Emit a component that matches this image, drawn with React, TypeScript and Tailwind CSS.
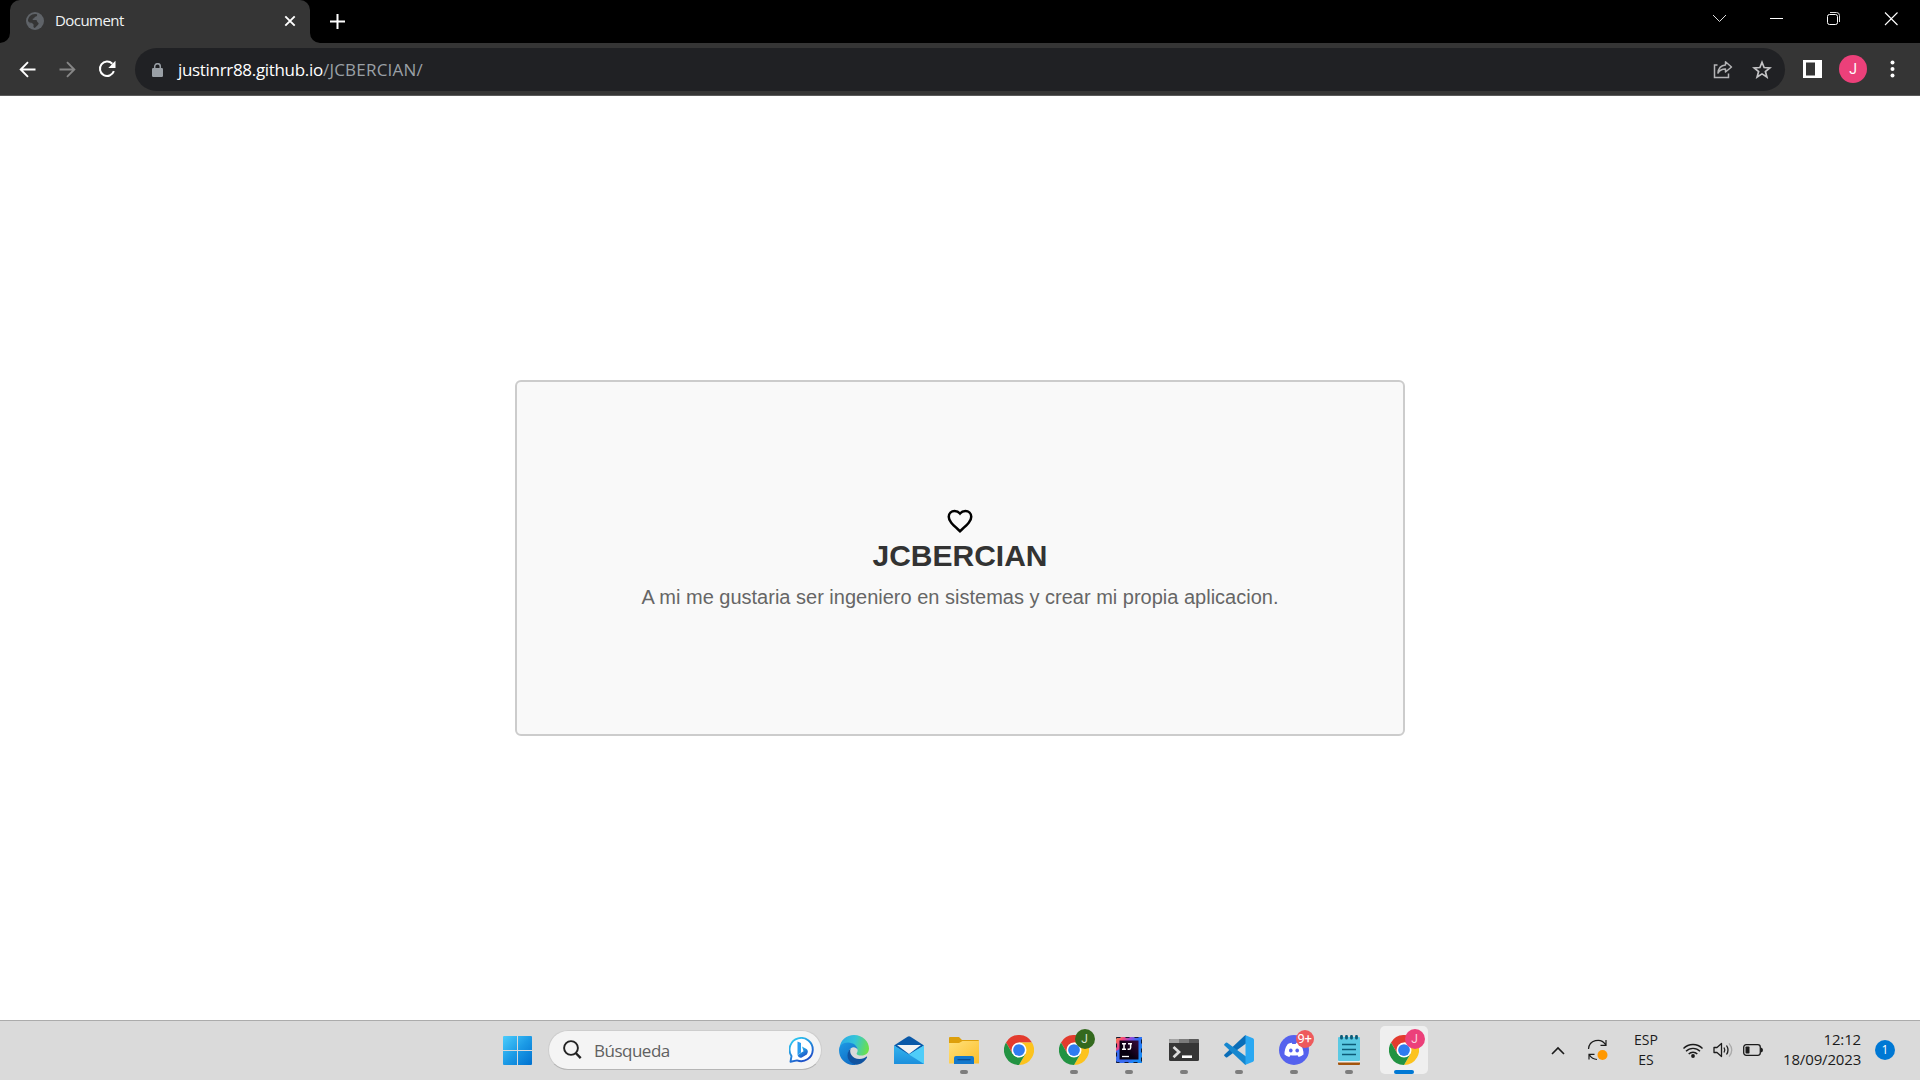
import React from "react";

const UI = "font-['Open_Sans','Noto_Sans',sans-serif]";

function Tab() {
  return (
    <div className="relative ml-[10px] flex h-[43px] w-[300px] items-center rounded-t-[10px] bg-[#353535] pl-4 pr-[14px]">
      <svg className="absolute -left-[10px] bottom-0" width="10" height="10"><path d="M10 0V10H0A10 10 0 0 0 10 0Z" fill="#353535" /></svg>
      <svg className="absolute -right-[10px] bottom-0" width="10" height="10"><path d="M0 0V10H10A10 10 0 0 1 0 0Z" fill="#353535" /></svg>
      <svg width="18" height="18" viewBox="0 0 18 18" className="-mt-[1px]">
        <circle cx="9" cy="9" r="9" fill="#5f6368" />
        <path d="M11 2.300C11.600 3.600 10.600 4.600 9.200 4.700C8.400 4.900 8.800 6.200 7.400 6.500C6.200 6.800 6.400 8 7.400 8H10C11.200 8.200 11 9.600 11.600 10.200C12.600 10.700 13 11.600 12.200 12.600C11 14 10.200 15 8.600 16C7.400 15.600 7.200 14.800 7.600 13.600C7.800 12.500 7.200 11.600 6.200 11.200H3.500L2 9C2 5.200 5 2 9 2Z" fill="#353535" />
        <path d="M2.300 10.200C3.500 11.300 5 11.200 6 11.400" fill="none" stroke="#5f6368" />
      </svg>
      <span className={`${UI} ml-[11px] -mt-[4px] text-[15px] leading-5 tracking-[-0.55px] text-[#f1f3f4]`}>Document</span>
      <svg className="ml-auto -mt-[1px]" width="12" height="12" viewBox="0 0 12 12"><path d="M1.3 1.3L10.7 10.7M10.7 1.3L1.3 10.7" stroke="#fff" strokeWidth="1.9" /></svg>
    </div>
  );
}

function TitleBar() {
  return (
    <div className="flex h-[43px] bg-black">
      <Tab />
      <svg className="ml-[19px] mt-[13px]" width="17" height="17" viewBox="0 0 17 17"><path d="M8.5 1V16M1 8.5H16" stroke="#fff" strokeWidth="2" /></svg>
      <div className="ml-auto flex h-[37px] items-center text-white">
        <svg width="58" height="37"><path d="M23 15L29.5 21.5L36 15" fill="none" stroke="#ddd" strokeWidth="1" /></svg>
        <svg width="57" height="37"><path d="M22 18.5H35" stroke="#fff" /></svg>
        <svg width="57" height="37"><rect x="22.5" y="14.5" width="10" height="10" rx="2" fill="none" stroke="#fff" /><path d="M25 12.5H31.500A3 3 0 0 1 34.500 15.500V22" fill="none" stroke="#ddd" /></svg>
        <svg width="58" height="37"><path d="M23 12.500L35.500 25M35.500 12.500L23 25" stroke="#fff" strokeWidth="1.100" /></svg>
      </div>
    </div>
  );
}

function Toolbar() {
  return (
    <div className="flex h-[53px] items-center border-b border-[#5a5a5a] bg-[#353535]">
      <svg className="ml-[19px]" width="17" height="17" viewBox="0 0 17 17"><path d="M16.500 8.500H2M9 1.200L1.700 8.500L9 15.800" fill="none" stroke="#fff" strokeWidth="1.900" /></svg>
      <svg className="ml-[23px]" width="17" height="17" viewBox="0 0 17 17"><path d="M0.500 8.500H15M8 1.200L15.300 8.500L8 15.800" fill="none" stroke="#868686" strokeWidth="1.900" /></svg>
      <svg className="ml-[22px]" width="18" height="18" viewBox="0 0 18 18"><path d="M14.300 3.700A7.200 7.200 0 1 0 15.900 11.200" fill="none" stroke="#fff" strokeWidth="2" /><path d="M17.500 0.800V8H10.300Z" fill="#fff" /></svg>
      <div className="ml-[19px] mt-[1px] flex h-[43px] w-[1650px] items-center rounded-full bg-[#202124] pl-[17px] pr-[13px]">
        <svg width="11" height="14" viewBox="0 0 11 14"><rect y="5" width="11" height="9" rx="1.200" fill="#9aa0a6" /><path d="M2.700 5.500V3.500A2.800 2.800 0 0 1 8.300 3.500V5.500" fill="none" stroke="#9aa0a6" strokeWidth="1.500" /></svg>
        <div className={`${UI} ml-[15px] flex text-[17px] leading-6`}>
          <span className="w-[145px] whitespace-nowrap tracking-[-0.32px] text-white">justinrr88.github.io</span>
          <span className="whitespace-nowrap tracking-[0.2px] text-[#9aa0a6]">/JCBERCIAN/</span>
        </div>
        <svg className="ml-auto" width="20" height="19" viewBox="0 0 20 19"><path d="M4.500 5H1.500V17.500H15.500V13.500" fill="none" stroke="#b4b4b6" strokeWidth="1.500" /><path d="M12.500 1.800L18.500 7L12.500 12V9C9 8.900 6.700 10.200 5 13C5.300 8.500 8 5.400 12.500 4.900Z" fill="none" stroke="#b4b4b6" strokeWidth="1.500" strokeLinejoin="round" /></svg>
        <svg className="ml-[19px]" width="20" height="20" viewBox="0 0 20 20"><path d="M10 2.300L12.100 7.500L17.800 7.900L13.400 11.500L14.900 17L10 13.900L5.100 17L6.600 11.500L2.200 7.900L7.900 7.500Z" fill="none" stroke="#c4c4c6" strokeWidth="1.700" /></svg>
      </div>
      <svg className="ml-[18px]" width="19" height="18"><path fillRule="evenodd" d="M0 0H19V18H0ZM3 2.500V15.500H12V2.500Z" fill="#fff" /></svg>
      <div className="ml-[17px] flex h-7 w-7 items-center justify-center rounded-full bg-[#ec407a] font-[Roboto,sans-serif] text-[14px] text-white">J</div>
      <svg className="ml-[23px]" width="5" height="18"><circle cx="2.500" cy="2.500" r="2" fill="#fff" /><circle cx="2.500" cy="9" r="2" fill="#fff" /><circle cx="2.500" cy="15.500" r="2" fill="#fff" /></svg>
    </div>
  );
}

function Chrome() {
  return (
    <svg width="30" height="30" viewBox="0 0 48 48">
      <path d="M24 12H44.800A24 24 0 0 0 3.200 12L13.600 30Z" fill="#e33b2e" />
      <path d="M34.400 30L24 48A24 24 0 0 0 44.800 12H24Z" fill="#fcc31e" />
      <path d="M13.600 30L3.200 12A24 24 0 0 0 24 48L34.400 30Z" fill="#229342" />
      <circle cx="24" cy="24" r="12" fill="#fff" />
      <circle cx="24" cy="24" r="9.400" fill="#2f7cf0" />
    </svg>
  );
}

function Edge() {
  return (
    <svg width="30" height="30" viewBox="0 0 30 30">
      <defs>
        <linearGradient id="edgeTop" x1="0" y1="0.300" x2="1" y2="0.500"><stop offset="0" stopColor="#2aa9e8" /><stop offset=".5" stopColor="#35c5d8" /><stop offset="1" stopColor="#6be04a" /></linearGradient>
        <linearGradient id="edgeLeft" x1="0" y1="0" x2="0.600" y2="1"><stop offset="0" stopColor="#1f9be6" /><stop offset="1" stopColor="#0f6cc4" /></linearGradient>
      </defs>
      <path d="M0.500 13C1.500 5 7.500 0 15 0C24 0 30 6.500 30 13.500C30 18 26.500 20.500 22.500 20.500C19.500 20.500 17.300 19.500 17.600 18.400C18 17.500 18.800 16.800 18.600 14.800C18.200 11.500 14.500 8.500 10 8.500C5.500 8.500 2 10.500 0.500 13Z" fill="url(#edgeTop)" />
      <path d="M0 15C0 10.500 4 7.500 9 7.500C14.500 7.500 18.600 11.200 18.600 14.800C17.500 12.300 14 11.400 11.600 13.600C7.500 17.500 9.500 26.500 17.500 29.800C8 31.500 0 24.500 0 15Z" fill="url(#edgeLeft)" />
      <path d="M11.600 13.600C10 18 13 24 20.500 24C24 24 25.800 22.700 27.300 21.700C28 21.400 28.300 22 28 22.600C25.800 26.800 21.800 29.600 17.500 29.800C8 28.500 6 18.500 11.600 13.600Z" fill="#1053a0" />
    </svg>
  );
}

function Mail() {
  return (
    <svg width="30" height="28" viewBox="0 0 30 28">
      <defs><linearGradient id="mailBody" x1="0" y1="0" x2="0" y2="1"><stop offset="0" stopColor="#33b4ee" /><stop offset="1" stopColor="#1c8fdc" /></linearGradient></defs>
      <path d="M0 9.500L13.500 0.700Q15 -0.200 16.500 0.700L30 9.500L15 20Z" fill="#0a59a8" />
      <path d="M3 9H27L15 18Z" fill="#f3f3f3" />
      <path d="M0 9.500L15 18.500L30 9.500V28H0Z" fill="url(#mailBody)" />
      <path d="M30 9.500V28L15 18.500Z" fill="#4fcdf9" />
    </svg>
  );
}

function Folder() {
  return (
    <svg width="30" height="27" viewBox="0 0 30 27">
      <defs><linearGradient id="folderFront" x1="0" y1="0" x2="1" y2="1"><stop offset="0" stopColor="#ffe07a" /><stop offset="1" stopColor="#fcbf2b" /></linearGradient></defs>
      <path d="M0 1Q0 0 1 0H10L13 3H29Q30 3 30 4V12H0Z" fill="#dd9f0b" />
      <path d="M0 6H10L13.500 4H30V26.500H0Z" fill="url(#folderFront)" />
      <path d="M5 27V21Q5 19 7 19H23Q25 19 25 21V27Z" fill="#1378cc" />
      <path d="M8.500 22.700H21.500" stroke="#0a4a8c" strokeWidth="1.200" />
    </svg>
  );
}

function IntelliJ() {
  return (
    <svg width="26" height="26" viewBox="0 0 26 26">
      <defs>
        <linearGradient id="ijBase" x1="0" y1="0" x2="1" y2="0.700"><stop offset="0" stopColor="#fb8a4c" /><stop offset=".22" stopColor="#f2447c" /><stop offset=".42" stopColor="#8a4be0" /><stop offset=".6" stopColor="#2f6df2" /><stop offset="1" stopColor="#1b8cf5" /></linearGradient>
        <linearGradient id="ijInner" x1="0" y1="1" x2="1" y2="0"><stop offset=".4" stopColor="#080010" /><stop offset="1" stopColor="#3a0a3c" /></linearGradient>
      </defs>
      <path d="M0 0H26V26H0Z" fill="url(#ijBase)" />
      <path d="M0 14L4 12V23H16L12 26H0Z" fill="#3a6cf0" />
      <path d="M0.500 0.500H25.500V25.500H0.500Z" fill="none" stroke="#111a33" strokeDasharray="4 5" />
      <path d="M3.500 3.500H22.500V22.500H3.500Z" fill="url(#ijInner)" />
      <path d="M6 6.700H10M8 6.700V12.300M6 12.300H10M12 6.700H16M14.600 6.700V10.700Q14.600 12.300 12.900 12.300H11.600" fill="none" stroke="#fff" strokeWidth="1.500" />
      <path d="M6 19.500H13" stroke="#fff" strokeWidth="1.300" />
    </svg>
  );
}

function Terminal() {
  return (
    <svg width="30" height="22" viewBox="0 0 30 22">
      <rect width="30" height="22" rx="1.500" fill="#363636" />
      <path d="M0 4V1.500Q0 0 1.500 0H10V4Z" fill="#a3a3a3" /><path d="M10 0H20V4H10Z" fill="#7b7b7b" /><path d="M20 0H28.500Q30 0 30 1.500V4H20Z" fill="#595959" />
      <path d="M4.500 8L10 13L4.500 18.200" fill="none" stroke="#ddd" strokeWidth="2.700" /><path d="M13 17.700H23" stroke="#fff" strokeWidth="2.600" />
    </svg>
  );
}

function VsCode() {
  return (
    <svg width="30" height="30" viewBox="0 0 30 30">
      <path d="M22 0.300V8.500L3.300 22.300Q2.500 22.800 1.800 22.200L0.500 21Q-0.300 20.200 0.500 19.400L20.500 0.800Q21.200 0.200 22 0.300Z" fill="#0a6db8" />
      <path d="M22 29.700V21.500L3.300 7.700Q2.500 7.200 1.800 7.800L0.500 9Q-0.300 9.800 0.500 10.600L20.500 29.200Q21.200 29.800 22 29.700Z" fill="#1687cf" />
      <path d="M21.500 0.200L29 3.300Q30 3.800 30 5V25Q30 26.200 29 26.700L21.500 29.800Z" fill="#2aa8f2" />
    </svg>
  );
}

function Discord() {
  return (
    <svg width="30" height="30" viewBox="0 0 30 30">
      <circle cx="15" cy="15" r="15" fill="#5562ee" />
      <path d="M8.800 9Q10.500 8.100 12.700 7.800L13.300 8.900H16.700L17.300 7.800Q19.500 8.100 21.200 9Q24.800 14 24.500 19.600Q22.500 21.300 19.700 22L18.500 20.200Q15 21 11.500 20.200L10.300 22Q7.500 21.300 5.500 19.600Q5.200 14 8.800 9Z" fill="#fff" />
      <ellipse cx="11.800" cy="15.500" rx="1.800" ry="2" fill="#5562ee" /><ellipse cx="18.200" cy="15.500" rx="1.800" ry="2" fill="#5562ee" />
    </svg>
  );
}

function Notepad() {
  return (
    <svg width="22" height="30" viewBox="0 0 22 30">
      <rect y="26" width="22" height="4" rx="1" fill="#a3540d" />
      <rect y="25" width="22" height="2.500" fill="#eee" />
      <rect y="2" width="22" height="24" rx="1" fill="#5bc9e3" />
      <path d="M4 9.500H18M4 14.500H18M4 19.500H18" stroke="#0d5b78" strokeWidth="1.500" />
      <path d="M3.500 1.300V3.200M8.500 1.300V3.200M13.500 1.300V3.200M18.500 1.300V3.200" stroke="#0d5b78" strokeWidth="2.800" strokeLinecap="round" />
    </svg>
  );
}

type AppProps = { children: React.ReactNode; state?: "none" | "open" | "active"; badge?: React.ReactNode };

function TaskApp({ children, state = "open", badge }: AppProps) {
  return (
    <div className="flex w-[55px] justify-center">
      <div className={state === "active" ? "relative flex h-12 w-12 items-center justify-center rounded-[5px] bg-[#efefef]" : "relative flex h-12 w-12 items-center justify-center"}>
        {children}
        {badge}
        {state === "open" && <div className="absolute bottom-0 left-5 h-1 w-2 rounded-full bg-[#7d7d7d]" />}
        {state === "active" && <div className="absolute bottom-0 left-[14px] h-1 w-5 rounded-full bg-[#0078d4]" />}
      </div>
    </div>
  );
}

function Taskbar() {
  const badge = "absolute flex items-center justify-center rounded-full font-[Roboto,sans-serif]";
  return (
    <div className="flex h-[60px] items-center border-t border-[#ababab] bg-[#dadada] pb-[1px]">
      <svg className="ml-[503px]" width="29" height="29" viewBox="0 0 29 29">
        <defs><linearGradient id="win" gradientUnits="userSpaceOnUse" x1="0" y1="0" x2="29" y2="29"><stop offset="0" stopColor="#4ccdfc" /><stop offset=".5" stopColor="#1c9be6" /><stop offset="1" stopColor="#0070cf" /></linearGradient></defs>
        <path d="M0 1Q0 0 1 0H14V14H0ZM15 0H28Q29 0 29 1V14H15ZM0 15H14V29H1Q0 29 0 28ZM15 15H29V28Q29 29 28 29H15Z" fill="url(#win)" />
      </svg>
      <div className="ml-[16px] flex h-[40px] w-[274px] items-center rounded-full border border-[#cdcdcd] border-b-[#b5b5b5] bg-[#f4f4f4] pl-[14px] pr-[6px]">
        <svg width="19" height="20" viewBox="0 0 19 20"><circle cx="8" cy="8" r="6.900" fill="none" stroke="#222" strokeWidth="1.900" /><path d="M12.700 13L17.700 18.200" stroke="#222" strokeWidth="2.400" /></svg>
        <span className={`${UI} ml-[12px] mt-[1px] text-[17px] leading-6 tracking-[-0.500px] text-[#606060]`}>Búsqueda</span>
        <svg className="ml-auto" width="26" height="26" viewBox="0 0 26 26">
          <defs><linearGradient id="bing" x1="0" y1="0" x2="0.600" y2="1"><stop offset="0" stopColor="#2fd6f5" /><stop offset="1" stopColor="#1d4fc8" /></linearGradient></defs>
          <path d="M1.500 24.700L2.500 19A11.600 11.600 0 1 1 8 23.400Z" fill="#fff" stroke="url(#bing)" strokeWidth="1.900" strokeLinejoin="round" />
          <path d="M8.500 4.500L12 6V15.500L8.500 18Z" fill="#2b9df0" />
          <path d="M13 9.500L17.500 12Q20 14 17.800 17.500L12.800 20.500Q9.500 21.500 8.500 18L14.500 14.300Z" fill="url(#bing)" />
        </svg>
      </div>
      <div className="ml-[4px] flex">
        <TaskApp state="none"><Edge /></TaskApp>
        <TaskApp state="none"><Mail /></TaskApp>
        <TaskApp><Folder /></TaskApp>
        <TaskApp state="none"><Chrome /></TaskApp>
        <TaskApp badge={<div className={`${badge} right-[3px] top-[3px] h-5 w-5 bg-[#33691e] text-[12px] text-[#d5e0d0]`}>J</div>}><Chrome /></TaskApp>
        <TaskApp><IntelliJ /></TaskApp>
        <TaskApp><Terminal /></TaskApp>
        <TaskApp><VsCode /></TaskApp>
        <TaskApp badge={<div className={`${badge} right-[4px] top-[4px] h-[18px] w-[18px] bg-[#ee5a5c] text-[13px] tracking-[-0.300px] text-white`}>9+</div>}><Discord /></TaskApp>
        <TaskApp><Notepad /></TaskApp>
        <TaskApp state="active" badge={<div className={`${badge} right-[3px] top-[3px] h-5 w-5 bg-[#ec407a] text-[12px] text-[#fbd0dd]`}>J</div>}><Chrome /></TaskApp>
      </div>
      <div className={`${UI} ml-auto flex items-center text-[14px] leading-5 text-[#1b1b1b]`}>
        <svg width="14" height="9" viewBox="0 0 14 9"><path d="M1 8L7 2L13 8" fill="none" stroke="#1b1b1b" strokeWidth="1.600" /></svg>
        <svg className="ml-[22px]" width="22" height="22" viewBox="0 0 22 22"><path d="M1.500 10A9.300 9.300 0 0 1 18.500 5.500M19 1V6.300H13.500M2 20.500V15.300H7.500M2.500 16A9.500 9.500 0 0 0 10 20.500" fill="none" stroke="#1b1b1b" strokeWidth="1.200" /><circle cx="15.500" cy="16" r="5" fill="#ff9800" /></svg>
        <div className="ml-[24px] w-[26px] text-center"><div>ESP</div><div>ES</div></div>
        <svg className="ml-[23px]" width="22" height="16" viewBox="0 0 22 16"><g fill="none" stroke="#1b1b1b" strokeWidth="1.400"><path d="M1.500 6.500A13.300 13.300 0 0 1 20.500 6.500M4 9.300A9.800 9.800 0 0 1 18 9.300M6.700 12A6 6 0 0 1 15.300 12" /></g><circle cx="11" cy="14" r="1.900" fill="#1b1b1b" /></svg>
        <svg className="ml-[9px]" width="21" height="16" viewBox="0 0 21 16"><path d="M1 5.500H4L8.500 1.500V14.500L4 10.500H1Z" fill="none" stroke="#1b1b1b" strokeWidth="1.300" strokeLinejoin="round" /><path d="M11 5.500Q12.600 8 11 10.500M13.500 3.500Q16.500 8 13.500 12.500" fill="none" stroke="#1b1b1b" strokeWidth="1.300" /><path d="M16 1.300Q21.500 8 16 14.700" fill="none" stroke="#aaa" strokeWidth="1.300" /></svg>
        <svg className="ml-[9px]" width="20" height="12" viewBox="0 0 20 12"><rect x=".7" y=".7" width="16.600" height="10.600" rx="2.500" fill="none" stroke="#1b1b1b" strokeWidth="1.300" /><rect x="2.500" y="2.500" width="4" height="7" rx=".8" fill="#1b1b1b" /><path d="M18 3.500Q20 4 20 6T18 8.500Z" fill="#1b1b1b" /></svg>
        <div className="-mt-[2px] ml-[20px] w-[78px] whitespace-nowrap text-right text-[15px] tracking-[-0.150px]"><div>12:12</div><div>18/09/2023</div></div>
        <div className="ml-[14px] mr-[25px] flex h-5 w-5 items-center justify-center rounded-full bg-[#0078d4] text-[12px] text-white">1</div>
      </div>
    </div>
  );
}

export default function App() {
  return (
    <div className="flex h-[1080px] w-[1920px] flex-col overflow-hidden bg-white">
      <TitleBar />
      <Toolbar />
      <main className="flex flex-1 items-center justify-center font-['Liberation_Sans',Arial,sans-serif]">
        <div className="flex h-[356px] w-[890px] flex-col items-center justify-center rounded-[6px] border-2 border-[#ccc] bg-[#f9f9f9] pb-[2px]">
          <svg width="30" height="30" viewBox="0 0 24 24"><path d="M12 20.200L10.700 19C5.800 14.600 3 12 3 8.600C3 5.900 5.100 3.900 7.700 3.900C9.300 3.900 10.900 4.700 12 6C13.100 4.700 14.700 3.900 16.300 3.900C18.900 3.900 21 5.900 21 8.600C21 12 18.200 14.600 13.300 19Z" fill="none" stroke="#000" strokeWidth="2" /></svg>
          <h1 className="mt-[1px] text-[30px] font-bold leading-[37px] text-[#333]">JCBERCIAN</h1>
          <p className="mt-[12px] text-[20px] leading-[23px] text-[#666]">A mi me gustaria ser ingeniero en sistemas y crear mi propia aplicacion.</p>
        </div>
      </main>
      <Taskbar />
    </div>
  );
}
